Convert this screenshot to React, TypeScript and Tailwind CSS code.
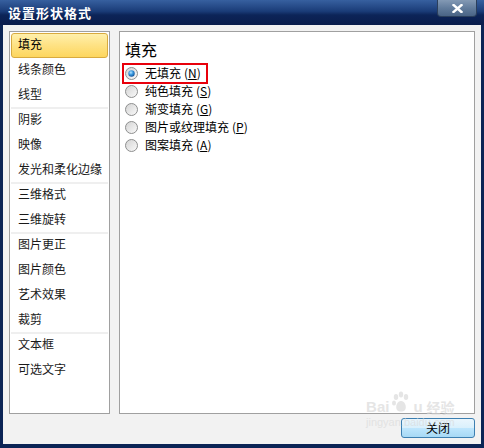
const groups: string[][] = [
  ["填充", "线条颜色", "线型"],
  ["阴影", "映像", "发光和柔化边缘"],
  ["三维格式", "三维旋转"],
  ["图片更正", "图片颜色", "艺术效果", "裁剪"],
  ["文本框", "可选文字"],
];

const options = [
  { label: "无填充", key: "N" },
  { label: "纯色填充", key: "S" },
  { label: "渐变填充", key: "G" },
  { label: "图片或纹理填充", key: "P" },
  { label: "图案填充", key: "A" },
];

function Radio({ checked }: { checked: boolean }) {
  return (
    <svg width="13" height="13" viewBox="0 0 13 13">
      <defs>
        <linearGradient id="rbg" x1="0" y1="0" x2="1" y2="1">
          <stop offset="0" stopColor="#d2d2d2" />
          <stop offset="1" stopColor="#fbfbfb" />
        </linearGradient>
        <radialGradient id="rdot" cx="0.4" cy="0.35" r="0.7">
          <stop offset="0" stopColor="#b9e4ff" />
          <stop offset="0.45" stopColor="#3d9be0" />
          <stop offset="1" stopColor="#0d4d94" />
        </radialGradient>
      </defs>
      <circle cx="6.5" cy="6.5" r="6" fill="url(#rbg)" stroke="#8e8f8f" strokeWidth="1" />
      {checked && <circle cx="6.5" cy="6.5" r="3.2" fill="url(#rdot)" />}
    </svg>
  );
}

export default function App() {
  return (
    <div
      className="w-[484px] h-[448px] flex flex-col relative overflow-hidden"
      style={{ fontFamily: '"Noto Sans CJK SC", "Liberation Sans", sans-serif' }}
    >
      {/* Title bar */}
      <div className="h-[25px] relative flex items-center pl-[8px] bg-[linear-gradient(180deg,#37609f_0%,#1a3c78_45%,#0c2458_60%,#0a1d4c_100%)]">
        <span className="text-[13px] font-bold text-white leading-none tracking-[1px]">设置形状格式</span>
        <div className="absolute right-[7px] top-0 w-[40px] h-[17px] rounded-b-[4px] border border-t-0 border-[#2b3f5c] bg-[linear-gradient(180deg,#8399b4_0%,#627c9c_50%,#4a6485_100%)] flex items-center justify-center">
          <svg width="11" height="9" viewBox="0 0 11 9">
            <path d="M1.5 1 L9.5 8 M9.5 1 L1.5 8" stroke="#fff" strokeWidth="2.4" strokeLinecap="square" />
          </svg>
        </div>
      </div>

      {/* Body */}
      <div className="flex-1 flex flex-col bg-[#f2f2f2] border-x-[3px] border-b-[4px] border-[#0b2455] px-[6px] pt-[6px] pb-[6px] gap-[4px]">
        <div className="flex gap-[9px] h-[383px]">
          {/* Left nav */}
          <div className="w-[101px] border border-[#a0a0a0] bg-white p-[1px] flex flex-col">
            {groups.map((g, gi) => (
              <div key={gi} className="flex flex-col">
                {gi > 0 && <div className="h-[2px] -my-[1px] bg-[#efefef] relative" />}
                {g.map((item) => {
                  const sel = item === "填充";
                  return (
                    <div
                      key={item}
                      className={
                        sel
                          ? "h-[25px] flex items-center pl-[6px] pb-[3px] text-[12px] text-black rounded-[3px] border border-[#d8aa3f] bg-[linear-gradient(180deg,#fff0ab_0%,#fee387_45%,#fdd65e_100%)]"
                          : "h-[25px] flex items-center pl-[7px] pb-[3px] text-[12px] text-[#1a1a1a]"
                      }
                    >
                      {item}
                    </div>
                  );
                })}
              </div>
            ))}
          </div>

          {/* Right content */}
          <div className="flex-1 border border-[#a0a0a0] bg-white relative pl-[5px] pt-[7px]">
            <div className="text-[16px] leading-[20px] text-black">填充</div>
            <div className="mt-[5px] flex flex-col">
              {options.map((o, i) => (
                <div key={o.key} className="h-[18px] flex items-center gap-[7px]">
                  <Radio checked={i === 0} />
                  <span className="text-[12px] text-black leading-none">
                    {o.label}
                    <span className="ml-[3px]">
                      (<span className="underline">{o.key}</span>)
                    </span>
                  </span>
                </div>
              ))}
            </div>
            {/* red annotation */}
            <div className="absolute left-[2px] top-[31px] w-[86px] h-[21px] border-2 border-[#e8000b]" />
          </div>
        </div>

        {/* Button row */}
        <div className="flex justify-end">
          <button className="w-[74px] h-[20px] rounded-[3px] border border-[#3c7fb1] bg-[linear-gradient(180deg,#eaf6fd_0%,#d9f0fc_50%,#bee6fd_51%,#a7d9f5_100%)] text-[12px] text-black leading-none flex items-center justify-center">
            关闭
          </button>
        </div>
      </div>

      {/* watermark */}
      <div className="absolute left-[366px] top-[391px] pointer-events-none flex flex-col items-center opacity-60">
        <div className="flex items-end gap-[2px] text-[#d4d4d4]">
          <span className="text-[15px] font-bold leading-none" style={{ fontFamily: '"Liberation Sans", sans-serif' }}>Bai</span>
          <svg width="20" height="22" viewBox="0 0 20 22" className="mb-[1px]">
            <g fill="#d4d4d4">
              <ellipse cx="5" cy="6" rx="2.2" ry="3" />
              <ellipse cx="10" cy="3.5" rx="2.2" ry="3" />
              <ellipse cx="15" cy="6" rx="2.2" ry="3" />
              <ellipse cx="3" cy="12" rx="2" ry="2.6" />
              <path d="M10 10 C6 10 4 16 6 19 C8 21 12 21 14 19 C16 16 14 10 10 10 Z" />
            </g>
          </svg>
          <span className="text-[15px] font-bold leading-none" style={{ fontFamily: '"Liberation Sans", sans-serif' }}>u</span>
          <span className="text-[14px] font-bold leading-none ml-[2px]">经验</span>
        </div>
        <div className="text-[11px] leading-none mt-[3px] text-[#d8d8d8]" style={{ fontFamily: '"Liberation Sans", sans-serif' }}>
          jingyan.baidu.com
        </div>
      </div>
    </div>
  );
}
